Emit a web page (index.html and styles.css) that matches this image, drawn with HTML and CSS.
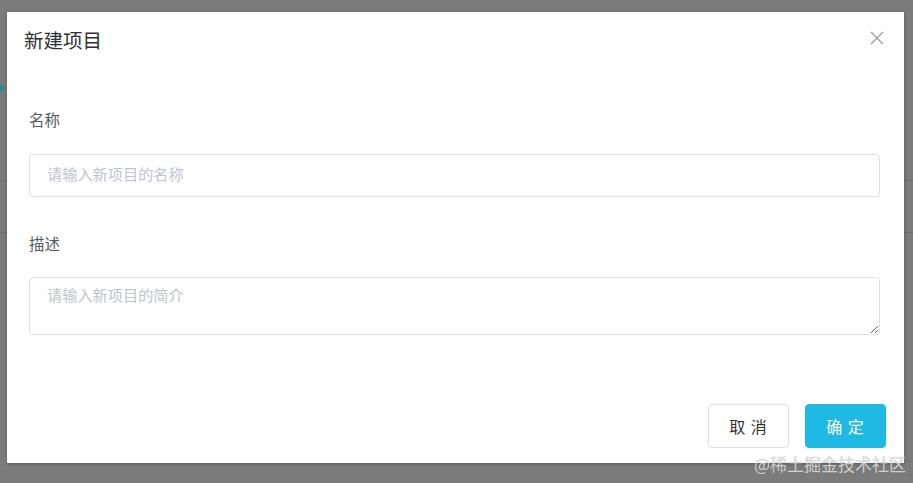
FILE: index.html
```html
<!DOCTYPE html>
<html lang="zh">
<head>
<meta charset="utf-8">
<link rel="stylesheet" href="styles.css">
</head>
<body>
<div class="page">
  <div class="band band-top">
    <svg class="chev" width="6" height="14" viewBox="0 0 6 14"><path d="M-4 2L2 7L-4 12M-1 2L5 7L-1 12" stroke="#2f8595" stroke-width="1.5" fill="none"/></svg>
  </div>
  <div class="band band-mid"></div>
</div>
<div class="modal">
  <div class="modal-header">
    <div class="modal-title">新建项目</div>
    <button class="close" aria-label="关闭">
      <svg width="14" height="14" viewBox="0 0 14 14"><path d="M1 1L13 13M13 1L1 13" stroke="#9a9a9a" stroke-width="1.2" fill="none"/></svg>
    </button>
  </div>
  <div class="modal-body">
    <label class="field-label label-first">名称</label>
    <input class="field-input" type="text" placeholder="请输入新项目的名称">
    <label class="field-label label-second">描述</label>
    <textarea class="field-textarea" placeholder="请输入新项目的简介"></textarea>
  </div>
  <div class="modal-footer">
    <button class="btn btn-default">取 消</button>
    <button class="btn btn-primary">确 定</button>
  </div>
</div>
<div class="watermark">@稀土掘金技术社区</div>
</body>
</html>
```
FILE: styles.css
```css
html, body {
  margin: 0;
  padding: 0;
  width: 913px;
  height: 483px;
  overflow: hidden;
  background: #7b7b7b;
  font-family: "Noto Sans CJK SC", "Noto Sans", sans-serif;
}
.page {
  display: flex;
  flex-direction: column;
}
.band-top {
  height: 180px;
  border-bottom: 1px solid #6c6c6c;
}
.band-mid {
  height: 51px;
  border-bottom: 1px solid #6c6c6c;
}
.chev {
  display: block;
  margin-top: 81px;
}
.modal {
  position: absolute;
  left: 7px;
  top: 12px;
  width: 897px;
  height: 451px;
  background: #fff;
  box-shadow: 0 1px 3px rgba(0,0,0,0.3);
  display: flex;
  flex-direction: column;
  box-sizing: border-box;
}
.modal-header {
  display: flex;
  justify-content: space-between;
  align-items: center;
  padding: 14px 20px 0 17px;
}
.modal-title {
  font-size: 19.5px;
  line-height: 28px;
  color: #303133;
}
.close {
  border: 0;
  background: none;
  padding: 0;
  width: 14px;
  height: 14px;
  display: flex;
  margin-top: -4px;
}
.modal-body {
  display: flex;
  flex-direction: column;
  padding: 53px 24px 0 22px;
}
.field-label {
  font-size: 15.5px;
  line-height: 24px;
  color: #555a60;
}
.label-first {
  margin-bottom: 1px;
}
.label-second {
  margin-top: 34px;
}
.field-input, .field-textarea {
  margin-top: 22px;
  box-sizing: border-box;
  width: 851px;
  border: 1px solid #dcdfe6;
  border-radius: 4px;
  font-family: "Noto Sans CJK SC", "Noto Sans", sans-serif;
  font-size: 15.2px;
  color: #606266;
  outline: none;
  background: #fff;
}
.field-input {
  height: 43px;
  padding: 0 17px 5px;
}
.field-textarea {
  height: 58px;
  padding: 4px 17px;
  line-height: 24px;
  display: block;
}
.field-input::placeholder, .field-textarea::placeholder {
  color: #c0c4cc;
}
.modal-footer {
  margin-top: auto;
  display: flex;
  justify-content: flex-end;
  gap: 16px;
  padding: 0 18px 15px 0;
}
.btn {
  width: 81px;
  height: 44px;
  border-radius: 4px;
  font-family: "Noto Sans CJK SC", "Noto Sans", sans-serif;
  font-size: 16px;
  letter-spacing: 1px;
  cursor: pointer;
}
.btn-default {
  background: #fff;
  border: 1px solid #dcdfe6;
  color: #333;
}
.btn-primary {
  background: #1fb9e6;
  border: 1px solid #1fb9e6;
  color: #fff;
}
.watermark {
  position: absolute;
  right: 7px;
  top: 452px;
  font-size: 17px;
  line-height: 24px;
  color: rgba(235,235,235,0.75);
  text-shadow: 0 0 1px rgba(120,120,120,0.6);
}
```
